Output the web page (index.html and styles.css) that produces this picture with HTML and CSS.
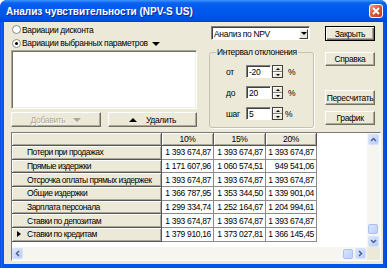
FILE: index.html
```html
<!DOCTYPE html>
<html lang="ru">
<head>
    <meta charset="UTF-8">
    <title>Анализ чувствительности</title>
    <link rel="stylesheet" href="styles.css">
</head>
<body>
    <div class="window">
        <div class="titlebar">
            <span class="title">Анализ чувствительности (NPV-S US)</span>
            <span class="close">
                <svg width="8" height="8" viewBox="0 0 8 8"><path d="M1 1L7 7M7 1L1 7" stroke="#fff" stroke-width="1.8"/></svg>
            </span>
        </div>

        <div class="client">
            <div class="top">
                <div class="left">
                    <div class="radio"><span class="mark"></span>Вариации дисконта</div>
                    <div class="radio"><span class="mark on"></span>Вариации выбранных параметров<span class="tri-down big"></span></div>
                    <div class="listbox"></div>
                    <div class="btn-row">
                        <div class="btn btn-add">Добавить <span class="tri-down gray"></span></div>
                        <div class="btn btn-del"><span class="tri-up"></span>Удалить</div>
                    </div>
                </div>

                <div class="middle">
                    <div class="combo">
                        <span class="combo-text">Анализ по NPV</span>
                        <span class="combo-btn"><span class="tri-down small"></span></span>
                    </div>
                    <fieldset class="group">
                        <legend>Интервал отклонения</legend>
                        <div class="spin-row">
                            <span class="lbl">от</span>
                            <span class="edit">-20</span>
                            <span class="spin"><i><b class="up"></b></i><i><b class="down"></b></i></span>
                            <span class="pct">%</span>
                        </div>
                        <div class="spin-row">
                            <span class="lbl">до</span>
                            <span class="edit">20</span>
                            <span class="spin"><i><b class="up"></b></i><i><b class="down"></b></i></span>
                            <span class="pct">%</span>
                        </div>
                        <div class="spin-row">
                            <span class="lbl">шаг</span>
                            <span class="edit">5</span>
                            <span class="spin"><i><b class="up"></b></i><i><b class="down"></b></i></span>
                            <span class="pct near">%</span>
                        </div>
                    </fieldset>
                </div>

                <div class="right">
                    <div class="btn btn-close">Закрыть</div>
                    <div class="btn btn-help">Справка</div>
                    <div class="btn btn-calc">Пересчитать</div>
                    <div class="btn btn-chart">График</div>
                </div>
            </div>

            <div class="grid">
                <div class="grid-main">
                    <div class="cells">
                        <div class="sheet">
                            <div class="cell fixed"></div>
                            <div class="cell fixed head">10%</div>
                            <div class="cell fixed head">15%</div>
                            <div class="cell fixed head">20%</div>

                            <div class="cell fixed name">Потери при продажах</div>
                            <div class="cell">1 393 674,87</div>
                            <div class="cell">1 393 674,87</div>
                            <div class="cell">1 393 674,87</div>

                            <div class="cell fixed name">Прямые издержки</div>
                            <div class="cell">1 171 607,96</div>
                            <div class="cell">1 060 574,51</div>
                            <div class="cell">949 541,06</div>

                            <div class="cell fixed name">Отсрочка оплаты прямых издержек</div>
                            <div class="cell">1 393 674,87</div>
                            <div class="cell">1 393 674,87</div>
                            <div class="cell">1 393 674,87</div>

                            <div class="cell fixed name">Общие издержки</div>
                            <div class="cell">1 366 787,95</div>
                            <div class="cell">1 353 344,50</div>
                            <div class="cell">1 339 901,04</div>

                            <div class="cell fixed name">Зарплата персонала</div>
                            <div class="cell">1 299 334,74</div>
                            <div class="cell">1 252 164,67</div>
                            <div class="cell">1 204 994,61</div>

                            <div class="cell fixed name">Ставки по депозитам</div>
                            <div class="cell">1 393 674,87</div>
                            <div class="cell">1 393 674,87</div>
                            <div class="cell">1 393 674,87</div>

                            <div class="cell fixed name current"><span class="pointer"></span>Ставки по кредитам</div>
                            <div class="cell">1 379 910,16</div>
                            <div class="cell">1 373 027,81</div>
                            <div class="cell">1 366 145,45</div>
                        </div>
                    </div>
                    <div class="vscroll">
                        <span class="sbtn">
                            <svg width="7" height="5" viewBox="0 0 7 5"><path d="M1 4L3.5 1.5L6 4" fill="none" stroke="#4d6185" stroke-width="1.5"/></svg>
                        </span>
                        <span class="track"></span>
                        <span class="thumb"></span>
                        <span class="sbtn">
                            <svg width="7" height="5" viewBox="0 0 7 5"><path d="M1 1L3.5 3.5L6 1" fill="none" stroke="#4d6185" stroke-width="1.5"/></svg>
                        </span>
                    </div>
                </div>
                <div class="hbar">
                    <div class="hscroll">
                        <span class="sbtn">
                            <svg width="5" height="7" viewBox="0 0 5 7"><path d="M4 1L1.5 3.5L4 6" fill="none" stroke="#4d6185" stroke-width="1.5"/></svg>
                        </span>
                        <span class="track"></span>
                        <span class="thumb"></span>
                        <span class="sbtn">
                            <svg width="5" height="7" viewBox="0 0 5 7"><path d="M1 1L3.5 3.5L1 6" fill="none" stroke="#4d6185" stroke-width="1.5"/></svg>
                        </span>
                    </div>
                    <div class="corner"></div>
                </div>
            </div>
        </div>
    </div>
</body>
</html>
```

FILE: styles.css
```css
* {
    margin: 0;
    padding: 0;
    box-sizing: border-box;
}

:root {
    --face: #ece9d8;
    --shadow: #aca899;
    --dark: #716f64;
    --line: #8c8c8c;
    --blue: #0055ea;
}

body {
    background: #fff;
    font-family: "Liberation Sans", Arial, sans-serif;
    font-size: 8.5px;
    letter-spacing: -0.33px;
    color: #000;
}

/* window frame */
.window {
    width: 387px;
    height: 268px;
    background: linear-gradient(to right, #0831d9 0, #166aee 1px, var(--blue) 3px, var(--blue) 383px, #0a4fd8 386px, #0831d9 387px);
    border-radius: 7px 7px 0 0;
    display: flex;
    flex-direction: column;
    overflow: hidden;
}

.titlebar {
    height: 22px;
    display: flex;
    align-items: center;
    padding: 0 4px 0 6px;
    background: linear-gradient(#3d95ff 0, #0a62f0 3px, #0058ee 9px, #0055e8 16px, #0049dc 21px, #003cc8 22px);
}

.title {
    flex: 1;
    color: #fff;
    font-weight: bold;
    font-size: 10px;
    letter-spacing: 0;
    text-shadow: 1px 1px #0a2a9a;
}

.close {
    width: 14px;
    height: 14px;
    border: 1px solid #fff;
    border-radius: 3px;
    background: linear-gradient(135deg, #f0a080 0, #e0593c 45%, #c53a1c 100%);
    display: flex;
    align-items: center;
    justify-content: center;
}

.client {
    flex: 1;
    margin: 0 4px 4px 4px;
    background: var(--face);
    padding: 1px 2px 0 7px;
}

.top {
    display: flex;
}

/* left side */
.left {
    width: 186px;
    display: flex;
    flex-direction: column;
}

.radio {
    height: 13px;
    display: flex;
    align-items: center;
    white-space: nowrap;
}

.radio + .radio {
    height: 14px;
}

.mark {
    width: 9px;
    height: 9px;
    margin: 0 1px 0 1px;
    border-radius: 50%;
    border: 1px solid #8a8a8a;
    background: #fff;
    position: relative;
}

.mark.on::after {
    content: "";
    position: absolute;
    left: 2px;
    top: 2px;
    width: 3px;
    height: 3px;
    border-radius: 50%;
    background: #000;
}

.tri-down {
    width: 0;
    height: 0;
    border-left: 4px solid transparent;
    border-right: 4px solid transparent;
    border-top: 4px solid #000;
}

.tri-down.big {
    margin-left: 4px;
    margin-top: 1px;
}

.tri-down.gray {
    border-top-color: var(--shadow);
}

.tri-down.small {
    border-left-width: 3px;
    border-right-width: 3px;
    border-top-width: 3px;
}

.tri-up {
    width: 0;
    height: 0;
    border-left: 4px solid transparent;
    border-right: 4px solid transparent;
    border-bottom: 4px solid #000;
}

.listbox {
    height: 59px;
    background: #fff;
    border: 1px solid;
    border-color: var(--shadow) #fff #fff var(--shadow);
    box-shadow: inset 1px 1px var(--dark), inset -1px -1px #f1efe2;
}

.btn {
    height: 15px;
    background: var(--face);
    border: 1px solid;
    border-color: #fff var(--dark) var(--dark) #fff;
    box-shadow: inset -1px -1px var(--shadow);
    display: flex;
    align-items: center;
    justify-content: center;
    white-space: nowrap;
}

.btn-row {
    display: flex;
    gap: 7px;
    margin-top: 3px;
}

.btn-add {
    width: 90px;
    gap: 8px;
    color: var(--shadow);
    text-shadow: 1px 1px #fff;
}

.btn-del {
    width: 89px;
    gap: 9px;
}

/* middle column */
.middle {
    width: 105px;
    margin-left: 12px;
}

.combo {
    margin: 3px 0 0 2px;
    width: 99px;
    height: 14px;
    background: #fff;
    border: 1px solid;
    border-color: #808080 #fff #fff #808080;
    box-shadow: inset 1px 1px #404040;
    display: flex;
    align-items: center;
    padding: 1px 1px 0 2px;
}

.combo-text {
    flex: 1;
}

.combo-btn {
    width: 9px;
    height: 10px;
    background: var(--face);
    border: 1px solid;
    border-color: #fff #404040 #404040 #fff;
    display: flex;
    align-items: center;
    justify-content: center;
}

.group {
    margin-top: 7px;
    height: 81px;
    border: 1px solid #c5c2b2;
    border-radius: 3px;
    box-shadow: 1px 1px #fff;
    padding: 8px 0 0 16px;
}

.group legend {
    margin-left: -10px;
    padding: 0 1px;
    line-height: 10px;
    white-space: nowrap;
}

.spin-row {
    display: flex;
    align-items: center;
    height: 13px;
}

.spin-row + .spin-row {
    margin-top: 8px;
}

.lbl {
    width: 20px;
}

.edit {
    width: 25px;
    height: 13px;
    background: #fff;
    border: 1px solid;
    border-color: #808080 #fff #fff #808080;
    box-shadow: inset 1px 1px #404040;
    padding: 1px 0 0 2px;
    line-height: 11px;
}

.spin {
    width: 11px;
    height: 13px;
    margin-left: 1px;
    border: 1px solid #404040;
    display: flex;
    flex-direction: column;
}

.spin i {
    flex: 1;
    background: var(--face);
    box-shadow: inset 1px 1px #fff;
    display: flex;
    align-items: center;
    justify-content: center;
}

.spin i + i {
    border-top: 1px solid #808080;
}

.spin b {
    width: 0;
    height: 0;
    border-left: 2px solid transparent;
    border-right: 2px solid transparent;
}

.spin b.up {
    border-bottom: 2px solid #000;
}

.spin b.down {
    border-top: 2px solid #000;
}

.pct {
    margin-left: 5px;
}

.pct.near {
    margin-left: 2px;
}

/* right column */
.right {
    width: 50px;
    margin-left: 11px;
    display: flex;
    flex-direction: column;
}

.btn-close {
    margin-top: 3px;
    border: 1px solid #000;
    box-shadow: inset 1px 1px #fff, inset -1px -1px var(--dark), inset -2px -2px var(--shadow);
}

.btn-help {
    margin-top: 11px;
    height: 14px;
}

.btn-calc {
    margin-top: 24px;
}

.btn-chart {
    margin-top: 6px;
    height: 14px;
}

/* data grid */
.grid {
    margin-top: 4px;
    width: 370px;
    height: 129px;
    border: 1px solid;
    border-color: #7a7a7a #fff #fff #7a7a7a;
    display: flex;
    flex-direction: column;
    background: #fff;
}

.grid-main {
    display: flex;
    height: 114px;
}

.cells {
    flex: 1;
    overflow: hidden;
}

.sheet {
    display: grid;
    grid-template-columns: 150px 52px 52px 51px;
    grid-template-rows: 13px;
    grid-auto-rows: 13.67px;
    width: 305px;
}

.cell {
    border-right: 1px solid var(--line);
    border-bottom: 1px solid var(--line);
    padding: 0 2px 0 0;
    display: flex;
    align-items: center;
    justify-content: flex-end;
    white-space: nowrap;
    overflow: hidden;
}

.fixed {
    background: var(--face);
    border-color: #555;
    box-shadow: inset 1px 1px #fff, inset -1px -1px var(--shadow);
}

.head {
    justify-content: center;
    padding: 0;
}

.name {
    justify-content: flex-start;
    padding-left: 15px;
    letter-spacing: -0.5px;
}

.name.current {
    padding-left: 5px;
}

.pointer {
    width: 0;
    height: 0;
    border-top: 3.5px solid transparent;
    border-bottom: 3.5px solid transparent;
    border-left: 4px solid #000;
    margin-right: 6px;
}

/* scrollbars */
.vscroll {
    width: 13px;
    padding: 1px 1px 0 0;
    background: #f6f5f0;
    display: flex;
    flex-direction: column;
    align-items: center;
}

.sbtn {
    width: 11px;
    height: 11px;
    border: 1px solid #d6e1fb;
    border-radius: 2px;
    background: linear-gradient(135deg, #dde7fe, #b9cdfb);
    display: flex;
    align-items: center;
    justify-content: center;
}

.track {
    flex: 1;
}

.thumb {
    width: 10px;
    height: 10px;
    border: 1px solid #a9c0f3;
    border-radius: 2px;
    background: linear-gradient(135deg, #d8e4fe, #bccffb);
}

.vscroll .thumb {
    margin-bottom: 2px;
}

.hbar {
    display: flex;
    height: 13px;
}

.hscroll {
    flex: 1;
    display: flex;
    align-items: center;
    background: #f6f5f0;
    padding-right: 1px;
}

.hscroll .thumb {
    margin-right: 2px;
}

.corner {
    width: 13px;
    background: var(--face);
}
```
